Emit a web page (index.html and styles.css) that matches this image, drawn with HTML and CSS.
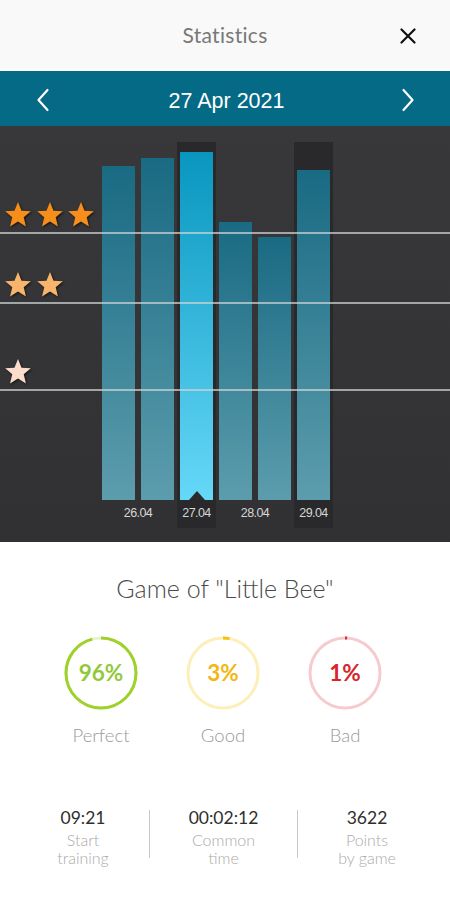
FILE: index.html
```html
<!DOCTYPE html>
<html lang="en">
<head>
<meta charset="utf-8">
<title>Statistics</title>
<link rel="stylesheet" href="styles.css">
</head>
<body>
<div class="app">
  <header class="topbar">
    <span class="spacer"></span>
    <h1 class="title">Statistics</h1>
    <span class="close-wrap">
      <svg class="close" viewBox="0 0 16 16" width="16" height="16"><path d="M1.5 1.5L14.5 14.5M14.5 1.5L1.5 14.5" stroke="#111" stroke-width="2.2" stroke-linecap="round" fill="none"/></svg>
    </span>
  </header>

  <nav class="datebar">
    <svg class="chev" viewBox="0 0 14 24" width="14" height="24"><path d="M11.5 2L2.5 12L11.5 22" stroke="#fff" stroke-width="2.2" fill="none" stroke-linecap="round" stroke-linejoin="round"/></svg>
    <span class="date">27 Apr 2021</span>
    <svg class="chev" viewBox="0 0 14 24" width="14" height="24"><path d="M2.5 2L11.5 12L2.5 22" stroke="#fff" stroke-width="2.2" fill="none" stroke-linecap="round" stroke-linejoin="round"/></svg>
  </nav>

  <section class="chart">
    <div class="plot">
      <div class="hl hl-3"></div>
      <div class="hl hl-6"></div>
      <div class="col c1"><div class="bar" style="height:334px"></div></div>
      <div class="col c2"><div class="bar" style="height:342px"></div></div>
      <div class="col c3"><div class="bar bar-sel" style="height:348px"><span class="notch"></span></div></div>
      <div class="col c4"><div class="bar" style="height:278px"></div></div>
      <div class="col c5"><div class="bar" style="height:263px"></div></div>
      <div class="col c6"><div class="bar" style="height:330px"></div></div>
      <div class="lbl l1">26.04</div>
      <div class="lbl l2">27.04</div>
      <div class="lbl l3">28.04</div>
      <div class="lbl l4">29.04</div>
    </div>

    <div class="levels">
      <div class="level lv3">
        <div class="stars">
          <svg class="star" viewBox="0 0 28 28"><polygon points="14,1 17.53,9.65 26.84,10.33 19.71,16.35 21.94,25.42 14,20.5 6.06,25.42 8.29,16.35 1.16,10.33 10.47,9.65"/></svg>
          <svg class="star" viewBox="0 0 28 28"><polygon points="14,1 17.53,9.65 26.84,10.33 19.71,16.35 21.94,25.42 14,20.5 6.06,25.42 8.29,16.35 1.16,10.33 10.47,9.65"/></svg>
          <svg class="star" viewBox="0 0 28 28"><polygon points="14,1 17.53,9.65 26.84,10.33 19.71,16.35 21.94,25.42 14,20.5 6.06,25.42 8.29,16.35 1.16,10.33 10.47,9.65"/></svg>
        </div>
        <div class="line"></div>
      </div>
      <div class="level lv2">
        <div class="stars">
          <svg class="star" viewBox="0 0 28 28"><polygon points="14,1 17.53,9.65 26.84,10.33 19.71,16.35 21.94,25.42 14,20.5 6.06,25.42 8.29,16.35 1.16,10.33 10.47,9.65"/></svg>
          <svg class="star" viewBox="0 0 28 28"><polygon points="14,1 17.53,9.65 26.84,10.33 19.71,16.35 21.94,25.42 14,20.5 6.06,25.42 8.29,16.35 1.16,10.33 10.47,9.65"/></svg>
        </div>
        <div class="line"></div>
      </div>
      <div class="level lv1">
        <div class="stars">
          <svg class="star" viewBox="0 0 28 28"><polygon points="14,1 17.53,9.65 26.84,10.33 19.71,16.35 21.94,25.42 14,20.5 6.06,25.42 8.29,16.35 1.16,10.33 10.47,9.65"/></svg>
        </div>
        <div class="line"></div>
      </div>
    </div>
  </section>

  <section class="summary">
    <h2 class="game">Game of "Little Bee"</h2>
    <div class="rings">
      <div class="ring-item">
        <div class="ring">
          <svg viewBox="0 0 76 76" width="76" height="76">
            <circle class="track" cx="38" cy="38" r="35" stroke="#e6f4c6"/>
            <circle class="arc" cx="38" cy="38" r="35" pathLength="100" stroke="#9fd12b" stroke-dasharray="96 100"/>
          </svg>
          <span class="pct pct-green">96%</span>
        </div>
        <div class="ring-label">Perfect</div>
      </div>
      <div class="ring-item">
        <div class="ring">
          <svg viewBox="0 0 76 76" width="76" height="76">
            <circle class="track" cx="38" cy="38" r="35" stroke="#fcefb8"/>
            <circle class="arc" cx="38" cy="38" r="35" pathLength="100" stroke="#f5c30e" stroke-dasharray="3 100"/>
          </svg>
          <span class="pct pct-yellow">3%</span>
        </div>
        <div class="ring-label">Good</div>
      </div>
      <div class="ring-item">
        <div class="ring">
          <svg viewBox="0 0 76 76" width="76" height="76">
            <circle class="track" cx="38" cy="38" r="35" stroke="#f6cbcf"/>
            <circle class="arc" cx="38" cy="38" r="35" pathLength="100" stroke="#dc2f36" stroke-dasharray="1 100"/>
          </svg>
          <span class="pct pct-red">1%</span>
        </div>
        <div class="ring-label">Bad</div>
      </div>
    </div>

    <div class="stats">
      <div class="stat">
        <div class="val">09:21</div>
        <div class="cap">Start<br>training</div>
      </div>
      <div class="divider"></div>
      <div class="stat">
        <div class="val">00:02:12</div>
        <div class="cap">Common<br>time</div>
      </div>
      <div class="divider"></div>
      <div class="stat">
        <div class="val">3622</div>
        <div class="cap">Points<br>by game</div>
      </div>
    </div>
  </section>
</div>
</body>
</html>
```

FILE: styles.css
```css
* { box-sizing: border-box; }
html, body { margin: 0; padding: 0; }
body { background: #fff; font-family: "Lato", "Liberation Sans", sans-serif; width: 450px; }
.app { width: 450px; }

.topbar {
  height: 71px;
  background: #f9f9f9;
  border-bottom: 2px solid #ffffff;
  display: grid;
  grid-template-columns: 1fr auto 1fr;
  align-items: center;
  padding-bottom: 1px;
}
.title {
  margin: 0;
  font-family: "Lato", sans-serif;
  font-weight: 400;
  font-size: 21px;
  color: #787878;
  letter-spacing: 0.3px;
}
.close-wrap { justify-self: end; display: flex; padding-right: 34px; padding-top: 3px; }
.close { display: block; }

.datebar {
  height: 55px;
  background: #056a86;
  display: flex;
  align-items: center;
  justify-content: space-between;
  padding: 5px 35px 0 36px;
}
.chev { display: block; margin-top: -3px; }
.date {
  font-family: "Liberation Sans", Arial, sans-serif;
  font-size: 21.5px;
  color: #fff;
  margin-left: 2px;
}

.chart {
  position: relative;
  height: 416px;
  background: linear-gradient(#38383b, #313133);
  padding: 16px 0 0 99px;
  overflow: hidden;
}
.plot {
  display: grid;
  grid-template-columns: repeat(6, 39px);
  grid-template-rows: 358px 28px;
}
.hl { grid-row: 1 / 3; background: #29292b; }
.hl-3 { grid-column: 3; }
.hl-6 { grid-column: 6; }
.col { grid-row: 1; display: flex; align-items: flex-end; justify-content: center; }
.c1 { grid-column: 1; } .c2 { grid-column: 2; } .c3 { grid-column: 3; }
.c4 { grid-column: 4; } .c5 { grid-column: 5; } .c6 { grid-column: 6; }
.bar {
  width: 33px;
  background: linear-gradient(#196a83, #5c9dad);
  position: relative;
}
.bar-sel { background: linear-gradient(#0896bf, #66d8f8); }
.notch {
  position: absolute;
  left: 50%;
  bottom: 0;
  margin-left: -8px;
  width: 0; height: 0;
  border-left: 8px solid transparent;
  border-right: 8px solid transparent;
  border-bottom: 9px solid #2b2b2d;
}
.lbl {
  grid-row: 2;
  text-align: center;
  font-family: "Liberation Sans", Arial, sans-serif;
  font-size: 12.5px;
  letter-spacing: -0.6px;
  line-height: 27px;
  color: #d6d6d6;
}
.l1 { grid-column: 1 / 3; }
.l2 { grid-column: 3; }
.l3 { grid-column: 4 / 6; }
.l4 { grid-column: 6; }

.levels {
  position: absolute;
  inset: 0;
  padding-top: 75px;
  pointer-events: none;
}
.level { display: flex; flex-direction: column; }
.lv2 { margin-top: 37px; }
.lv1 { margin-top: 54px; }
.stars { display: flex; gap: 3.6px; padding-left: 4px; height: 28px; }
.star { width: 28px; height: 28px; display: block; filter: drop-shadow(1px 1.5px 1px rgba(0,0,0,0.65)); }
.lv3 .star { fill: #f78e1c; }
.lv2 .star { fill: #f6b46c; }
.lv1 .star { fill: #fcdccb; }
.line { height: 2px; margin-top: 3px; background: rgba(205,210,214,0.72); }

.summary { padding-top: 31px; }
.game {
  margin: 0;
  text-align: center;
  font-family: "Lato", sans-serif;
  font-weight: 300;
  font-size: 25px;
  line-height: 30px;
  color: #4a4a4a;
}
.rings {
  display: grid;
  grid-template-columns: repeat(3, 122px);
  padding-left: 40px;
  margin-top: 32px;
}
.ring-item { display: flex; flex-direction: column; align-items: center; }
.ring { position: relative; width: 76px; height: 76px; display: flex; align-items: center; justify-content: center; }
.ring svg { position: absolute; inset: 0; transform: rotate(-90deg); }
.ring circle { fill: none; stroke-width: 3; }
.pct {
  position: relative;
  font-family: "Lato", sans-serif;
  font-weight: 700;
  font-size: 22.5px;
  line-height: 1;
}
.pct-green { color: #92c93a; }
.pct-yellow { color: #f3b711; }
.pct-red { color: #d8242c; }
.ring-label {
  margin-top: 12px;
  font-family: "Lato", sans-serif;
  font-weight: 300;
  font-size: 18.5px;
  line-height: 24px;
  color: #9a9a9a;
}

.stats {
  display: grid;
  grid-template-columns: 132px 1px 147px 1px 138px;
  padding-left: 17px;
  margin-top: 60px;
}
.stat { text-align: center; }
.val {
  font-family: "Lato", sans-serif;
  font-weight: 400;
  font-size: 17.5px;
  line-height: 22px;
  color: #2e2e2e;
  margin-bottom: 2px;
}
.cap {
  font-family: "Lato", sans-serif;
  font-weight: 300;
  font-size: 16px;
  line-height: 18px;
  color: #aaaaaa;
}
.divider { background: #c9c9c9; height: 48px; margin-top: 3px; }
```
